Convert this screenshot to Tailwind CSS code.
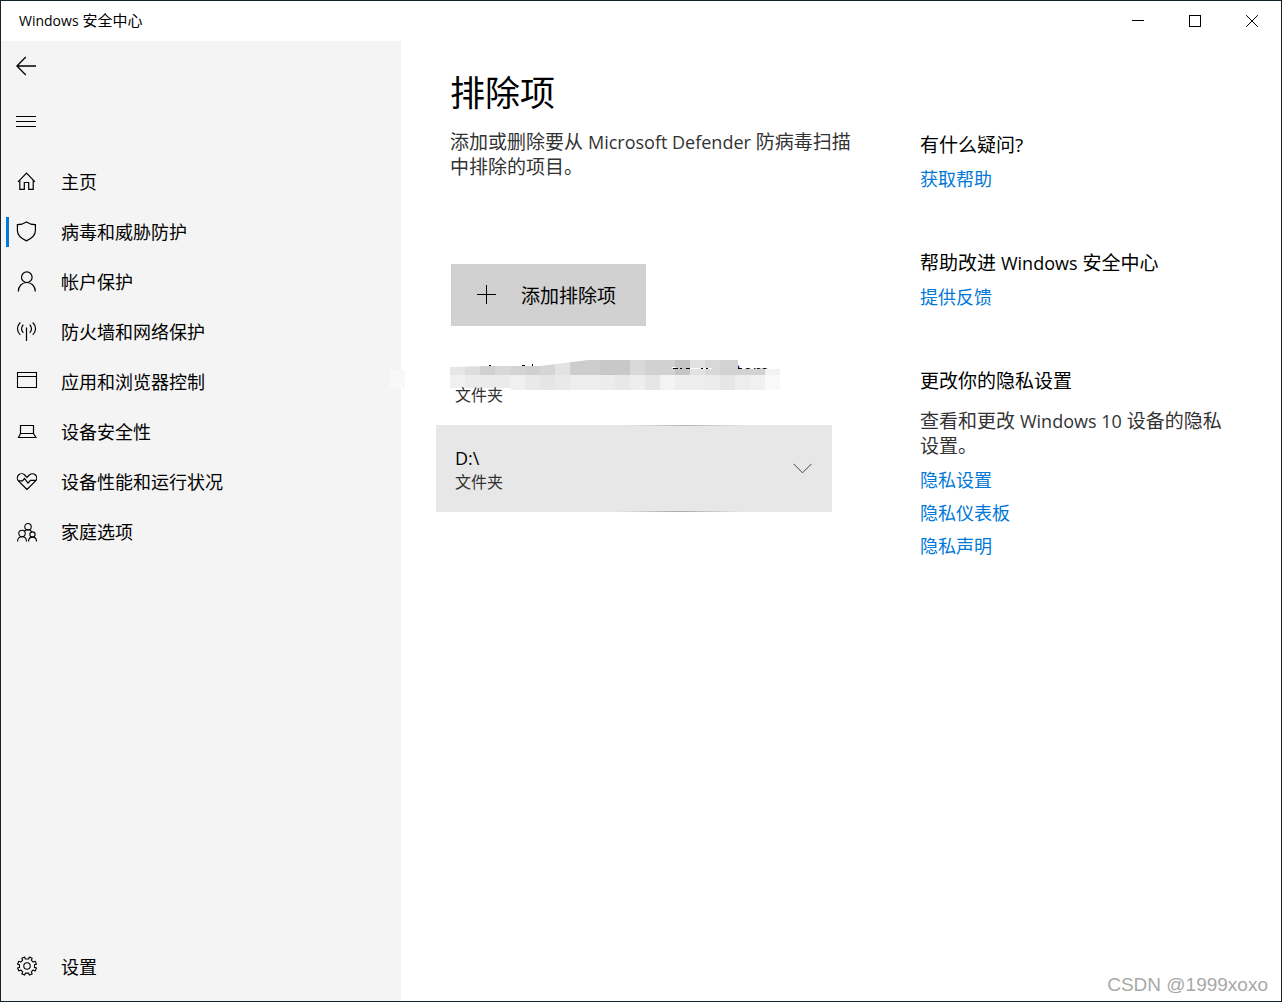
<!DOCTYPE html>
<html lang="zh-CN">
<head>
<meta charset="utf-8">
<meta name="viewport" content="width=device-width, initial-scale=1">
<title>Windows 安全中心</title>
<script src="https://cdn.jsdelivr.net/npm/@tailwindcss/browser@4"></script>
</head>
<body class="relative flex min-h-screen flex-col border border-[#14222a] bg-white font-['Open_Sans','Noto_Sans_CJK_SC',sans-serif] text-lg font-normal text-black">

<header class="flex h-10 shrink-0 items-center justify-between pr-px pl-[18px]">
  <span class="text-[15px]"><span class="text-[14px]">Windows</span> 安全中心</span>
  <div class="flex h-full">
    <button type="button" aria-label="最小化" class="flex w-[57px] items-center justify-center">
      <svg class="size-3" viewBox="0 0 12 12" fill="none" stroke="#000" shape-rendering="crispEdges"><path d="M0 5.5h12"/></svg>
    </button>
    <button type="button" aria-label="最大化" class="flex w-[57px] items-center justify-center">
      <svg class="size-3" viewBox="0 0 12 12" fill="none" stroke="#000" shape-rendering="crispEdges"><path d="M.5.5h11v11H.5z"/></svg>
    </button>
    <button type="button" aria-label="关闭" class="flex w-[57px] items-center justify-center">
      <svg class="size-3" viewBox="0 0 12 12" fill="none" stroke="#000"><path d="M.2.2l11.6 11.6M11.8.2L.2 11.8"/></svg>
    </button>
  </div>
</header>

<div class="flex flex-1">
  <aside class="relative flex w-[400px] shrink-0 flex-col bg-[#f4f4f4]">
    <span class="absolute top-[329px] -right-1 h-[18px] w-[15px] bg-[#f8f8f8]"></span>
    <button type="button" aria-label="返回" class="flex h-[50px] w-[50px] items-center justify-center">
      <svg class="size-5" viewBox="0 0 20 20" fill="none" stroke="#000" stroke-width="1.3"><path d="M20 10H1M9.800 1L.9 10l8.900 9"/></svg>
    </button>
    <button type="button" aria-label="菜单" class="mt-1 flex h-[54px] w-[50px] items-center justify-center">
      <svg class="size-5" viewBox="0 0 20 20" fill="none" stroke="#000" shape-rendering="crispEdges"><path d="M0 4.500h20M0 9.500h20M0 14.500h20"/></svg>
    </button>
    <nav class="mt-2 flex flex-1 flex-col pb-[9px]">
      <a href="#" class="flex h-[50px] items-center gap-6 pl-[15px]">
        <svg class="size-[21px]" viewBox="0 1 21 21" fill="none" stroke="#000" stroke-width="1.200"><path d="M2 10.800L10.500 2l8.500 8.800M3.800 9.200v9.200h4.500v-6.900h4.400v6.900h4.500V9.200"/></svg>
        <span>主页</span>
      </a>
      <a href="#" aria-current="page" class="flex h-[50px] items-center pl-[5px]">
        <span class="h-[30px] w-[3px] bg-[#0078d7]"></span>
        <svg class="ml-[7px] size-[21px]" viewBox="0 1 21 21" overflow="visible" fill="none" stroke="#000" stroke-width="1.200"><path d="M10.400.9c2.400 1.600 5.300 2.600 9 2.700v6.200c0 4.300-4.500 8-9 10.100-4.500-2.100-9-5.800-9-10.100V3.600c3.700-.1 6.600-1.100 9-2.700z"/></svg>
        <span class="ml-6">病毒和威胁防护</span>
      </a>
      <a href="#" class="flex h-[50px] items-center gap-6 pl-[15px]">
        <svg class="size-[21px]" viewBox="0 1 21 21" overflow="visible" fill="none" stroke="#000" stroke-width="1.200"><circle cx="10.800" cy="6.200" r="5.300"/><path d="M2.300 20.500c0-5.300 3.800-9 8.500-9s8.500 3.700 8.500 9"/></svg>
        <span>帐户保护</span>
      </a>
      <a href="#" class="flex h-[50px] items-center gap-6 pl-[15px]">
        <svg class="size-[21px]" viewBox="0 1 21 21" overflow="visible" fill="none" stroke="#000" stroke-width="1.200"><path d="M10.500 6.500V20M4.300 1.500c-3.800 3.600-3.800 8.800 0 12.400M16.700 1.500c3.800 3.600 3.800 8.800 0 12.400M7.300 3.800c-2.400 2.300-2.400 5.600 0 7.900M13.700 3.800c2.400 2.300 2.400 5.600 0 7.900"/></svg>
        <span>防火墙和网络保护</span>
      </a>
      <a href="#" class="flex h-[50px] items-center gap-6 pl-[15px]">
        <svg class="size-[21px]" viewBox="0 1 21 21" overflow="visible" fill="none" stroke="#000" stroke-width="1.100"><path d="M1.500 1.500h19v15h-19zM1.500 5.500h19"/></svg>
        <span>应用和浏览器控制</span>
      </a>
      <a href="#" class="flex h-[50px] items-center gap-6 pl-[15px]">
        <svg class="size-[21px]" viewBox="0 0 21 21" fill="none" stroke="#000" stroke-width="1.200"><path d="M4.500 12V3.500h13V12M4.500 11.500h13l2.500 4h-17.500zM2.500 15.500h17.500"/></svg>
        <span>设备安全性</span>
      </a>
      <a href="#" class="flex h-[50px] items-center gap-6 pl-[15px]">
        <svg class="size-[21px]" viewBox="0 0 21 21" fill="none" stroke="#000" stroke-width="1.200"><path d="M11 17.500L2.600 9.200C.9 7.400.9 4.700 2.600 3c1.700-1.700 4.400-1.700 6.100 0L11 5.300 13.300 3c1.700-1.700 4.400-1.700 6.100 0 1.700 1.700 1.700 4.400 0 6.200zM2 8.800h4.500l2-2.300 3.500 4.500 2.500-2.700h5.500"/></svg>
        <span>设备性能和运行状况</span>
      </a>
      <a href="#" class="flex h-[50px] items-center gap-6 pl-[15px]">
        <svg class="size-[21px]" viewBox="0 0 21 21" fill="none" stroke="#000" stroke-width="1.100"><circle cx="12" cy="4.700" r="3.200"/><circle cx="6" cy="11.500" r="3.200"/><circle cx="16.500" cy="12.500" r="2.600"/><path d="M1.500 19.500c0-3 2-4.800 4.500-4.800s4.500 1.800 4.500 4.800M12.500 19.500c0-2.700 1.600-4.400 4-4.400s4 1.700 4 4.400M8.500 9c.7-.7 2-1.200 3.500-1.200s3.200.8 4 2.200"/></svg>
        <span>家庭选项</span>
      </a>
      <a href="#" class="mt-auto flex h-[50px] items-center gap-6 pl-[15px]">
        <svg class="size-[21px]" viewBox="0 1 21 21" overflow="visible" fill="none" stroke="#000" stroke-width="1.100" stroke-linejoin="round"><circle cx="11" cy="10" r="3.200"/><path d="M9.300 3l-.6-2-2.900 1.200.9 2-1.900 1.900-2-.9L1.500 8.100l2 .6v2.700l-2 .6 1.300 2.900 2-.9 1.900 1.900-.9 2 2.900 1.200.6-2h3.400l.6 2 2.900-1.200-.9-2 1.900-1.900 2 .9 1.300-2.900-2-.6V8.700l2-.6-1.300-2.900-2 .9-1.900-1.900.9-2L13.300 1l-.6 2z"/></svg>
        <span>设置</span>
      </a>
    </nav>
  </aside>

  <main class="flex flex-1 items-start pr-[39px] pl-[49px]">
    <section class="w-[412px] shrink-0">
      <h1 class="mt-[27px] text-[35px] leading-[50px]">排除项</h1>
      <p class="mt-3 text-[19px] leading-[25px] text-[#333]">添加或删除要从 <span class="text-[18px]">Microsoft Defender</span> 防病毒扫描中排除的项目。</p>
      <button type="button" class="mt-[84px] ml-px flex h-[62px] w-[195px] items-center gap-6 bg-[#d1d1d1] pl-[26px] text-[19px]">
        <svg class="size-5" viewBox="0 0 20 20" fill="none" stroke="#000" shape-rendering="crispEdges"><path d="M0 9.500h19M9.500 0v19"/></svg>
        <span class="pt-1">添加排除项</span>
      </button>

      <ul class="mt-[34px] -ml-[14px] w-[396px] text-base">
        <li class="h-[65px]">
          <svg class="ml-[14px] h-[30px] w-[330px]" viewBox="0 0 330 30" shape-rendering="crispEdges" aria-hidden="true">
            <defs>
              <clipPath id="smear"><path d="M0 7L40 6H90L138 0H288V9H330V30H62L60 28H0z"/></clipPath>
            </defs>
            <text x="286" y="18" font-size="18">tem</text>
            <g clip-path="url(#smear)">
              <path fill="#e6e6e6" d="M0 0h15v15H0z"/><path fill="#ddd" d="M15 0h15v15H15z"/><path fill="#d0d0d0" d="M30 0h15v15H30z"/><path fill="#d8d8d8" d="M45 0h15v15H45z"/><path fill="#d3d3d3" d="M60 0h15v15H60z"/><path fill="#d0d0d0" d="M75 0h15v15H75z"/><path fill="#d5d5d5" d="M90 0h15v15H90z"/><path fill="#e3e3e3" d="M105 0h15v15h-15z"/><path fill="#cdcdcd" d="M120 0h30v15h-30z"/><path fill="#c8c8c8" d="M150 0h30v15h-30z"/><path fill="#d9d9d9" d="M180 0h15v15h-15z"/><path fill="#d1d1d1" d="M195 0h30v15h-30z"/><path fill="#c5c5c5" d="M225 0h15v15h-15z"/><path fill="#e2e2e2" d="M240 0h15v15h-15z"/><path fill="#d8d8d8" d="M255 0h15v15h-15z"/><path fill="#d2d2d2" d="M270 0h45v15h-45z"/><path fill="#f2f2f2" d="M315 0h15v15h-15z"/>
              <path fill="#f0f0f0" d="M0 15h15v15H0z"/><path fill="#ebebeb" d="M15 15h45v15H15z"/><path fill="#f0f0f0" d="M60 15h15v15H60z"/><path fill="#e9e9e9" d="M75 15h15v15H75z"/><path fill="#e5e5e5" d="M90 15h15v15H90z"/><path fill="#e9e9e9" d="M105 15h15v15h-15z"/><path fill="#eee" d="M120 15h30v15h-30z"/><path fill="#ececec" d="M150 15h15v15h-15z"/><path fill="#e8e8e8" d="M165 15h15v15h-15z"/><path fill="#eee" d="M180 15h15v15h-15z"/><path fill="#e6e6e6" d="M195 15h15v15h-15z"/><path fill="#f3f3f3" d="M210 15h15v15h-15z"/><path fill="#eee" d="M225 15h30v15h-30z"/><path fill="#ececec" d="M255 15h15v15h-15z"/><path fill="#e6e6e6" d="M270 15h15v15h-15z"/><path fill="#ededed" d="M285 15h15v15h-15z"/><path fill="#f0f0f0" d="M300 15h15v15h-15z"/><path fill="#f9f9f9" d="M315 15h15v15h-15z"/>
            </g>
            <path fill="#fff" d="M240 8h22v1h-22zM222 7h4v1h-4z"/>
            <path d="M39 5h2v1h-2zM72 5h3v1h-3zM82 4h1v2h-1zM223 8h5v1h-5zM230 8h2v1h-2zM236 8h4v1h-4zM251 8h2v1h-2zM256 8h2v1h-2z"/>
          </svg>
          <p class="-mt-[5px] pl-[19px] leading-5 text-[#333]">文件夹</p>
        </li>
        <li>
          <button type="button" aria-expanded="false" class="relative flex h-[87px] w-full items-center justify-between bg-[#e7e7e7] pr-5 pl-[19px] text-left">
            <span class="absolute top-0 left-[190px] h-px w-[120px] bg-linear-to-r from-[#e7e7e7] via-[#b5b5b5] to-[#e7e7e7]"></span>
            <span class="flex flex-col pt-[3px]">
              <span class="text-lg leading-6">D:\</span>
              <span class="leading-6 text-[#333]">文件夹</span>
            </span>
            <svg class="h-[11px] w-[19px]" viewBox="0 0 19 11" fill="none" stroke="#444"><path d="M.5.800l9 9 9-9"/></svg>
            <span class="absolute bottom-0 left-[180px] h-px w-[125px] bg-linear-to-r from-[#e7e7e7] via-[#a8a8a8] to-[#e7e7e7]"></span>
          </button>
        </li>
      </ul>
    </section>

    <section class="mt-[91px] ml-[58px] max-w-[321px] flex-1 text-[19px]">
      <h2 class="leading-[26px]">有什么疑问?</h2>
      <a href="#" class="mt-[9px] block text-lg leading-[25px] text-[#0078d7]">获取帮助</a>

      <h2 class="mt-[58px] leading-[26px]">帮助改进 <span class="text-[18px]">Windows</span> 安全中心</h2>
      <a href="#" class="mt-[9px] block text-lg leading-[25px] text-[#0078d7]">提供反馈</a>

      <h2 class="mt-[58px] leading-[26px]">更改你的隐私设置</h2>
      <p class="mt-[15px] pr-2 leading-[25px] text-[#333]">查看和更改 <span class="text-[18px]">Windows 10</span> 设备的隐私设置。</p>
      <div class="mt-[9px] flex flex-col items-start gap-2 text-lg leading-[25px] text-[#0078d7]">
        <a href="#">隐私设置</a>
        <a href="#">隐私仪表板</a>
        <a href="#">隐私声明</a>
      </div>
    </section>
  </main>
</div>

<span class="absolute right-[13px] bottom-1 font-['Liberation_Sans',sans-serif] text-[19px] leading-6 text-[#a8a8a8]">CSDN @1999xoxo</span>
</body>
</html>
